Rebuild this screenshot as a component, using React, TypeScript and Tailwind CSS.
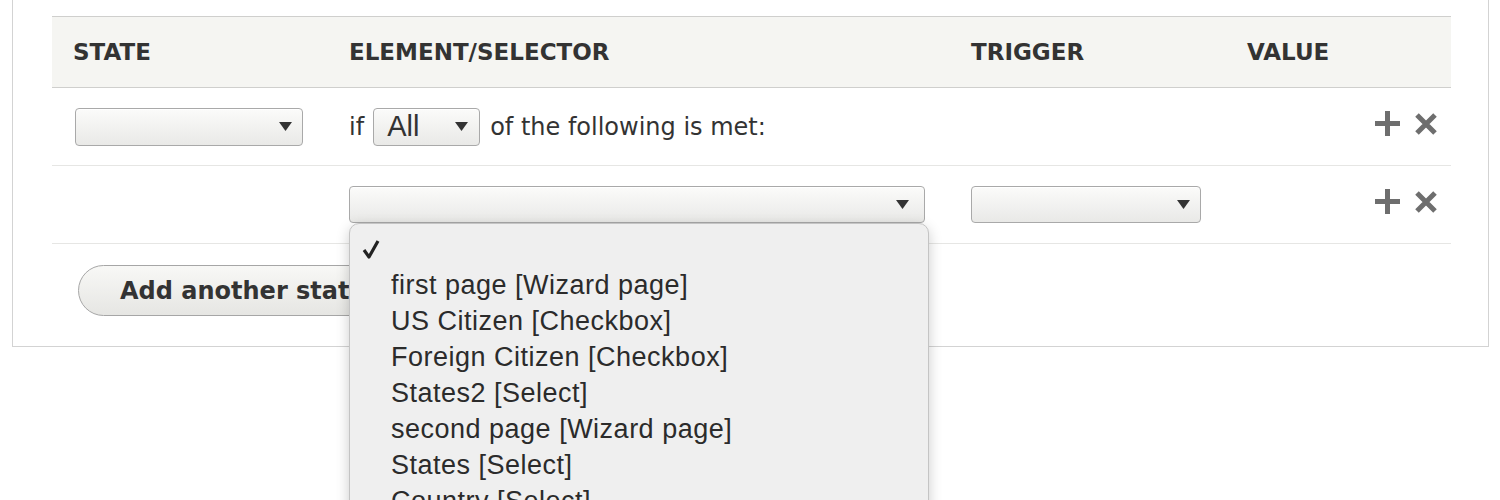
import React from 'react'

const headerFont = "font-['DejaVu_Sans',sans-serif]"

function Caret() {
  return (
    <svg width="15" height="11" viewBox="0 0 15 11" className="shrink-0">
      <path d="M1 1h13L7.5 10z" fill="#333" />
    </svg>
  )
}

function FakeSelect({
  width,
  height = 38,
  label,
  caretPad = 12,
}: {
  width: number
  height?: number
  label?: string
  caretPad?: number
}) {
  return (
    <div
      className="flex items-center justify-between rounded-[4px] border border-[#a9a9a9] bg-gradient-to-b from-[#fbfbfa] to-[#e9e9e7] pl-[13px] shadow-[inset_0_1px_0_#fff]"
      style={{ width, height, paddingRight: caretPad }}
    >
      <span className="font-['Liberation_Sans',Arial,sans-serif] text-[29px] leading-none text-[#333]">
        {label}
      </span>
      <Caret />
    </div>
  )
}

function RowOps() {
  return (
    <div className="-mt-[6px] flex items-center justify-end gap-[13px] pr-[13px]">
      <svg width="27" height="27" viewBox="0 0 27 27">
        <path d="M13.5 1v25M1 13.5h25" stroke="#6e6e6e" strokeWidth="5" />
      </svg>
      <svg width="24" height="24" viewBox="0 0 24 24">
        <path d="M3 3l18 18M21 3L3 21" stroke="#6e6e6e" strokeWidth="5" />
      </svg>
    </div>
  )
}

const options = [
  'first page [Wizard page]',
  'US Citizen [Checkbox]',
  'Foreign Citizen [Checkbox]',
  'States2 [Select]',
  'second page [Wizard page]',
  'States [Select]',
  'Country [Select]',
]

export default function App() {
  return (
    <div className={`relative h-[500px] w-[1500px] overflow-hidden bg-white text-[#333] ${headerFont}`}>
      <div className="ml-[12px] w-[1477px] border-x border-b border-[#d3d3d3] pb-[30px] pl-[39px] pr-[37px] pt-[16px]">
        {/* states table */}
        <div className="grid grid-cols-[297px_622px_276px_1fr]">
          <div className="col-span-4 grid h-[72px] grid-cols-subgrid items-center border-y border-[#cfcfcd] bg-[#f5f5f2] text-[23px] font-bold uppercase leading-none text-[#333]">
            <div className="pl-[21px]">State</div>
            <div>Element/Selector</div>
            <div>Trigger</div>
            <div>Value</div>
          </div>

          <div className="col-span-4 grid h-[78px] grid-cols-subgrid items-center border-b border-[#e6e6e4]">
            <div className="pl-[23px]">
              <FakeSelect width={228} caretPad={9} />
            </div>
            <div className="col-span-2 flex items-center text-[24px]">
              <span className="mr-[9px]">if</span>
              <FakeSelect width={107} label="All" caretPad={10} />
              <span className="ml-[10px]">of the following is met:</span>
            </div>
            <RowOps />
          </div>

          <div className="col-span-4 grid h-[78px] grid-cols-subgrid items-center border-b border-[#e6e6e4]">
            <div />
            <div>
              <FakeSelect width={576} height={37} caretPad={14} />
            </div>
            <div>
              <FakeSelect width={230} height={37} caretPad={9} />
            </div>
            <RowOps />
          </div>
        </div>

        <div className="pl-[26px] pt-[21px]">
          <button className="h-[51px] rounded-full border border-[#a6a6a6] bg-gradient-to-b from-[#f8f8f6] to-[#e6e6e3] px-[41px] text-[24px] font-bold text-[#333]">
            Add another state
          </button>
        </div>
      </div>

      {/* open select menu */}
      <div className="absolute left-[349px] top-[223px] h-[320px] w-[580px] rounded-[10px] border border-[#c4c4c4] bg-[#efefef] pt-[7px] shadow-[0_4px_14px_rgba(0,0,0,0.2)] font-['Liberation_Sans',Arial,sans-serif] text-[27px] tracking-[0.5px] text-[#2b2b2b]">
        <div className="flex h-[36px] items-center pl-[12px]">
          <svg width="18" height="20" viewBox="0 0 18 20">
            <path d="M2 11l5 7L16 2" fill="none" stroke="#222" strokeWidth="3.2" strokeLinejoin="round" />
          </svg>
        </div>
        {options.map((o) => (
          <div key={o} className="flex h-[36px] items-center pl-[41px] leading-none">
            {o}
          </div>
        ))}
      </div>
    </div>
  )
}
